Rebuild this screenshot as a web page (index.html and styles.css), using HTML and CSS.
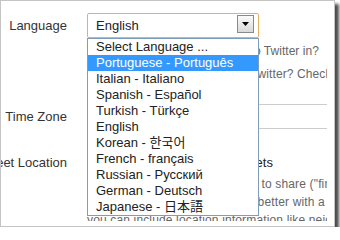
FILE: index.html
```html
<!DOCTYPE html>
<html lang="en">
<head>
<meta charset="utf-8">
<title>Settings</title>
<link rel="stylesheet" href="styles.css">
</head>
<body>
<div class="frame">
  <div class="clip">
    <div class="settings">
      <div class="row row-lang">
        <div class="label">Language</div>
        <div class="field">
          <div class="select focused">
            <span class="value">English</span>
            <span class="btn"><svg width="7" height="4" viewBox="0 0 7 4"><path d="M0 0H7L3.5 4Z" fill="#000"/></svg></span>
            <ul class="options">
              <li>Select Language ...</li>
              <li class="active">Portuguese - Português</li>
              <li>Italian - Italiano</li>
              <li>Spanish - Español</li>
              <li>Turkish - Türkçe</li>
              <li>English</li>
              <li>Korean - 한국어</li>
              <li>French - français</li>
              <li>Russian - Русский</li>
              <li>German - Deutsch</li>
              <li>Japanese - 日本語</li>
            </ul>
          </div>
          <p class="help">What language would you like to Twitter in?</p>
          <p class="help help-2">Interested in helping translate Twitter? Check out the Translation Center.</p>
        </div>
      </div>
      <div class="row row-tz">
        <div class="label">Time Zone</div>
        <div class="field">
          <div class="select tz"><span class="value">(GMT-03:00) Brasilia</span></div>
        </div>
      </div>
      <div class="row row-geo">
        <div class="label">Tweet Location</div>
        <div class="field">
          <label class="check"><span class="box"></span>Add a location to your tweets</label>
          <p class="desc">By enabling this, you've agreed to share ("fine-grained") location data with Twitter.<br>Sharing location makes tweets better with a little context, and<br>you can include location information like neighborhood, town or exact point.</p>
        </div>
      </div>
    </div>
  </div>
</div>
</body>
</html>
```
FILE: styles.css
```css
* { box-sizing: border-box; }

body {
  margin: 0;
  background: #fff;
  font-family: "Liberation Sans", Arial, "Noto Sans CJK KR", "Noto Sans CJK JP", sans-serif;
}

.frame {
  width: 335px;
  height: 227px;
  border: 1px solid #c4c4c4;
  background: #fff;
  box-shadow: 4px 4px 3px rgba(0, 0, 0, 0.7);
}

.clip {
  width: 326px;
  height: 220px;
  overflow: hidden;
}

.settings {
  width: 420px;
  margin-left: -34px;
}

.row {
  display: grid;
  grid-template-columns: 100px 1fr;
  column-gap: 20px;
  align-items: baseline;
}

.label {
  text-align: right;
  font-size: 13px;
  line-height: 16px;
  color: #333;
  white-space: nowrap;
}

.row-lang .field {
  padding: 12px 0 21px;
  border-bottom: 1px solid #ccc;
}

.row-tz .field {
  padding: 2px 0 1px;
  border-bottom: 1px solid #ccc;
}

.row-geo .field {
  padding-top: 26px;
}

.select {
  position: relative;
  display: flex;
  align-items: flex-start;
  width: 172px;
  height: 25px;
  border: 1px solid #e2b35e;
  border-radius: 2px;
  background: #fff;
  font-size: 13px;
  color: #222;
}

.select .value {
  flex: 1;
  padding: 1px 0 0 8px;
  line-height: 22px;
  white-space: nowrap;
}

.btn {
  width: 17px;
  height: 18px;
  margin: 1px 4px 0 0;
  border: 1px solid #8a8a8a;
  background: linear-gradient(#fbfbfb, #d9d9d9);
  display: flex;
  align-items: center;
  justify-content: center;
}

.btn svg { display: block; }

.options {
  position: absolute;
  top: calc(100% + 1px);
  left: -1px;
  width: 172px;
  margin: 0;
  padding: 0;
  list-style: none;
  border: 1px solid #7f9db9;
  background: #fff;
  z-index: 2;
}

.options li {
  height: 16px;
  line-height: 16px;
  padding-left: 8px;
  white-space: nowrap;
  font-size: 13px;
  color: #222;
  overflow: hidden;
}

.options li.active {
  background: #3399ff;
  color: #fff;
}

.help {
  margin: 4px 0 0;
  font-size: 12px;
  line-height: 18px;
  color: #666;
  letter-spacing: 0.03px;
  white-space: nowrap;
}

.help-2 {
  margin-top: 5px;
  letter-spacing: 0.1px;
}

.select.tz {
  width: 150px;
  height: 20px;
  border-color: #a5acb2;
  border-radius: 0;
}

.select.tz .value {
  padding-top: 0;
  line-height: 18px;
}

.check {
  display: block;
  font-size: 13px;
  line-height: 16px;
  color: #222;
  white-space: nowrap;
}

.box {
  display: inline-block;
  width: 13px;
  height: 13px;
  margin: 0 3px;
  border: 1px solid #777;
  background: #fff;
  vertical-align: -2px;
}

.desc {
  margin: 4px 0 0;
  font-size: 12px;
  line-height: 18px;
  color: #666;
  letter-spacing: 0.15px;
  white-space: nowrap;
}
```
